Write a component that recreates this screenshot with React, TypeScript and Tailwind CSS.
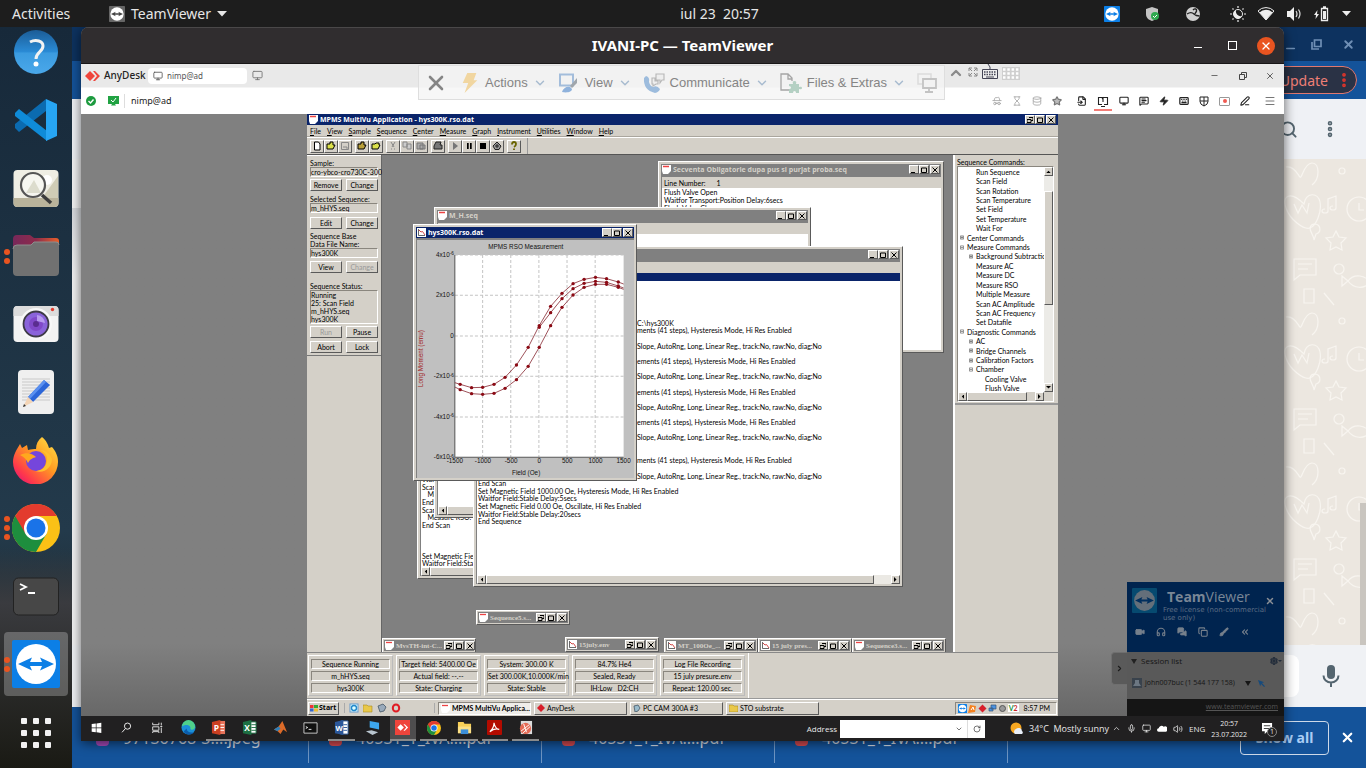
import React from "react";
import {
  ChevronDown, ChevronUp, X, Minus, Search, Menu, Copy, Zap, Star, Keyboard, Monitor,
  HatGlasses, Hourglass, Database, FileInput, MessageSquareText, PenLine, RotateCw, Headphones, Video,
  MessagesSquare, Brush, ChevronsLeft, Settings, Volume2, Mic, MoreVertical,
} from "lucide-react";

const RAISED = "border border-t-white border-l-white border-r-[#5a5a5a] border-b-[#5a5a5a] bg-[#d4d0c8]";
const SUNKEN = "border border-t-[#8a867e] border-l-[#8a867e] border-r-white border-b-white";
const TINY = "font-['Lato','Liberation_Sans',sans-serif]";

/* ---------- shared drawings ---------- */

function TvLogo({ className, bg = "#0c7fe6", fg = "#0c7fe6" }: { className: string; bg?: string; fg?: string }) {
  return (
    <svg viewBox="0 0 48 48" className={className} aria-hidden="true">
      <rect width="48" height="48" rx="2" fill={bg} />
      <circle cx="24" cy="24" r="20" fill="currentColor" />
      <path d="M6 24l14-6.500-2 4.500h12l-2-4.500L42 24l-14 6.500 2-4.500H18l2 4.500z" fill={fg} />
    </svg>
  );
}

function ChromeLogo({ className }: { className: string }) {
  return (
    <svg viewBox="0 0 48 48" className={className} aria-hidden="true">
      <circle cx="24" cy="24" r="24" fill="#fbc116" />
      <path d="M24 24L3.200 12A24 24 0 0 0 24 48l10.400-18z" fill="#1e8e3e" />
      <path d="M3.200 12A24 24 0 0 1 44.800 12H24L13.600 30z" fill="#e33b2e" />
      <circle cx="24" cy="24" r="12" fill="#fff" />
      <circle cx="24" cy="24" r="9.500" fill="#1a73e8" />
    </svg>
  );
}

function DocIcon({ chart = false }: { chart?: boolean }) {
  return (
    <svg viewBox="0 0 9 9" className="size-[9px] shrink-0" aria-hidden="true">
      <path d={chart ? "M0 0h9v9H0z" : "M0 0h9v6L6 9H1L0 6z"} fill="#fff" />
      {chart ? (
        <>
          <path d="M1.500 1v6.500H8" stroke="#444" fill="none" strokeWidth=".8" />
          <path d="M2 2l2 2 1.500-.5L8 7" stroke="#c33" fill="none" strokeWidth=".9" />
        </>
      ) : (
        <path d="M1 1.500h6" stroke="#e44" strokeWidth="1.300" />
      )}
    </svg>
  );
}

/* ---------- top panel ---------- */

function TopBar() {
  return (
    <header className="relative z-20 flex h-[27px] shrink-0 items-center justify-between bg-[#1d1d1d] text-[14px] text-[#e6e6e6]">
      <div className="flex flex-1 items-center pl-3">
        <button className="w-[97px] text-left">Activities</button>
        <button className="flex items-center gap-[6px]">
          <TvLogo className="size-4 text-white" bg="#666" fg="#444" />
          TeamViewer
          <svg viewBox="0 0 10 6" className="w-[10px]" aria-hidden="true"><path d="M0 0h10L5 5.500z" fill="#e6e6e6" /></svg>
        </button>
      </div>
      <button className="ml-[76px] whitespace-pre">iul 23  20:57</button>
      <div className="flex flex-1 items-center justify-end pr-[15px]">
        <TvLogo className="mr-[25px] size-4 text-white" />
        <svg viewBox="0 0 16 16" className="mr-6 size-4" aria-hidden="true">
          <path d="M7 1l6 2v5c0 4-3 6-6 7-3-1-6-3-6-7V3z" fill="#c4c4c4" />
          <circle cx="10" cy="10" r="4" fill="#2fa84f" /><path d="M8 10l1.500 1.500L12 9" stroke="#fff" fill="none" />
        </svg>
        <svg viewBox="0 0 16 16" className="mr-[29px] size-4" aria-hidden="true">
          <circle cx="8" cy="8" r="7" fill="#cfcfcf" />
          <path d="M2 8c3-2 5-2 7 0s4 2 5.500 2M8 4c2-2 4-1 3.500 1s-2 2-1 3" stroke="#222" fill="none" strokeWidth="1.400" />
        </svg>
        <svg viewBox="0 0 16 16" className="mr-3 size-4" aria-hidden="true">
          <circle cx="8" cy="8" r="4.500" fill="none" stroke="#eee" />
          <path d="M6 4a5 5 0 0 0 6 6 4.500 4.500 0 1 1-6-6z" fill="#eee" />
          <path d="M8 0v2M8 14v2M0 8h2M14 8h2M2.500 2.500l1 1M12.500 12.500l1 1M2.500 13.500l1-1M12.500 3.500l1-1" stroke="#eee" strokeWidth="1.200" />
        </svg>
        <svg viewBox="0 0 16 14" className="mr-3 w-4" aria-hidden="true">
          <path d="M0 4a11 11 0 0 1 16 0L8 13z" fill="none" stroke="#eee" /><path d="M1.500 5.500a9 9 0 0 1 13 0L8 13z" fill="#eee" />
        </svg>
        <svg viewBox="0 0 16 16" className="mr-3 size-4" aria-hidden="true">
          <path d="M1 5h3l4-4v14l-4-4H1z" fill="#eee" /><path d="M10 5q2 3 0 6M12.500 3.500q3 4.500 0 9" stroke="#ddd" fill="none" strokeWidth="1.200" />
        </svg>
        <svg viewBox="0 0 16 16" className="mr-3 size-4" aria-hidden="true">
          <path d="M3.500 4L0 9h2l-.5 4L5 8H3z" fill="#eee" />
          <path d="M7.500 2.500h6v12h-6zM9 1h3" stroke="#eee" fill="none" strokeWidth="1.300" /><path d="M9 5h3v8H9z" fill="#eee" />
        </svg>
        <svg viewBox="0 0 10 6" className="w-[9px]" aria-hidden="true"><path d="M0 0h10L5 5.500z" fill="#eee" /></svg>
      </div>
    </header>
  );
}

/* ---------- dock ---------- */

const dockItems: { name: string; dots: number; art: React.ReactNode }[] = [
  { name: "Help", dots: 0, art: (
    <svg viewBox="0 0 48 48" className="size-12">
      <defs><linearGradient id="hg" x2="0" y2="1"><stop offset="0" stopColor="#1b5c96" /><stop offset=".5" stopColor="#2a8bd6" /><stop offset=".52" stopColor="#3b9be0" /><stop offset="1" stopColor="#4aa8ea" /></linearGradient></defs>
      <circle cx="24" cy="24" r="22" fill="url(#hg)" />
      <path d="M18 14c6-3 13-1 13 4 0 6-7 6-7 13" stroke="#f2f2f2" strokeWidth="3" fill="none" /><circle cx="24" cy="36" r="2.500" fill="#fff" />
    </svg>) },
  { name: "Visual Studio Code", dots: 0, art: (
    <svg viewBox="0 0 48 48" className="size-12">
      <path d="M3 32l4 4 27-21V3L3 28z" fill="#0b6bb0" />
      <path d="M3 17l4-4 28 22v10L3 20z" fill="#0f8bd8" /><path d="M34 3l11 5v32l-11 5z" fill="#27a5f3" />
    </svg>) },
  { name: "Image Viewer", dots: 0, art: (
    <svg viewBox="0 0 48 48" className="size-12">
      <rect x="1.500" y="6" width="45" height="37" rx="4" fill="#efeee4" /><path d="M30 34l16-22v22z" fill="#cfccb6" />
      <path d="M1.500 34h45v5a4 4 0 0 1-4 4h-37a4 4 0 0 1-4-4z" fill="#b9b39b" /><circle cx="35" cy="16" r="5" fill="#fff" />
      <circle cx="21" cy="21" r="12" fill="#f6f6f0" stroke="#555" strokeWidth="2.200" /><path d="M14 29l8-13 7 13z" fill="#dcdccd" />
      <path d="M30 31l9 8" stroke="#3c3c3c" strokeWidth="3.500" />
    </svg>) },
  { name: "Files", dots: 2, art: (
    <svg viewBox="0 0 48 48" className="size-12">
      <defs><linearGradient id="fg"><stop offset="0" stopColor="#77285a" /><stop offset=".5" stopColor="#8d2b4b" /><stop offset="1" stopColor="#e9602a" /></linearGradient></defs>
      <path d="M1 7q0-4 4-4h13l4 3h22q3 0 3 3v12H1z" fill="url(#fg)" /><path d="M1 17q0-4 4-4h14l3-3h22q3 0 3 3v27q0 4-4 4H5q-4 0-4-4z" fill="#717171" />
      <path d="M1 17q0-4 4-4h14l3-3h22q3 0 3 3" fill="none" stroke="#8d8d8d" />
    </svg>) },
  { name: "Screenshot", dots: 0, art: (
    <svg viewBox="0 0 48 48" className="size-12">
      <rect x="1.500" y="6" width="45" height="36" rx="4" fill="#f3f3f3" /><path d="M1.500 16h45v-6a4 4 0 0 0-4-4h-37a4 4 0 0 0-4 4z" fill="#dcdcdc" />
      <circle cx="24" cy="24" r="16" fill="#f8f8f8" /><circle cx="24" cy="24" r="12.500" fill="#8a63da" stroke="#3d3a46" strokeWidth="1.800" />
      <circle cx="24" cy="24" r="7" fill="#8049c9" /><circle cx="24" cy="24" r="3" fill="#5a2d90" /><path d="M25 15a9 9 0 0 1 8 8l-8-2z" fill="#b79aee" /><circle cx="40.500" cy="9.500" r="1.700" fill="#e23a2c" />
    </svg>) },
  { name: "Text Editor", dots: 0, art: (
    <svg viewBox="0 0 48 48" className="size-12">
      <rect x="6" y="2" width="36" height="44" rx="4" fill="#efefef" />
      <path d="M10 11h28M10 14h28M10 17h28M10 20h28M10 23h28M10 26h28M10 29h28M10 32h28" stroke="#c9c9c9" />
      <path d="M16 29L32 12l6 5-17 17z" fill="#2c66d8" /><path d="M16 29L32 12l2 2-16 17z" fill="#5a90f0" /><path d="M16 29l5 5-10 5z" fill="#f3d4b5" /><path d="M12 36l2 2-3 1z" fill="#333" />
    </svg>) },
  { name: "Firefox", dots: 0, art: (
    <svg viewBox="0 0 48 48" className="size-12">
      <defs><linearGradient id="ff" x1="1" x2=".1" y2="1"><stop offset="0" stopColor="#ffe94a" /><stop offset=".45" stopColor="#ff9a22" /><stop offset=".8" stopColor="#ff3a4a" /><stop offset="1" stopColor="#e4107a" /></linearGradient></defs>
      <path d="M30 1c5 4 6 8 7 11l3-1c4 5 6 9 6 15a22.500 22.500 0 0 1-45 0C1 19 5 13 8 8l2 4 5-3 1 5c3-1 6-1 8-1 0-5 2-9 6-12z" fill="url(#ff)" />
      <circle cx="24" cy="25" r="10" fill="#7546dc" /><path d="M8 19c6-3 12-2 16 2-3 1-6 2-8 6-2-4-4-6-8-8z" fill="#ffa81e" /><path d="M28 14c6 2 9 8 6 14-2 5-6 7-11 7 10 3 17-4 17-12-2-5-6-9-12-9z" fill="#ffc02e" />
    </svg>) },
  { name: "Google Chrome", dots: 3, art: <ChromeLogo className="size-12" /> },
  { name: "Terminal", dots: 0, art: (
    <svg viewBox="0 0 48 48" className="size-12">
      <rect x="1.500" y="6" width="45" height="37" rx="5" fill="#474747" stroke="#222" /><path d="M8 12l6 3-6 3M16 21h7" stroke="#fff" strokeWidth="1.800" fill="none" />
    </svg>) },
  { name: "TeamViewer", dots: 2, art: <TvLogo className="size-12 text-white" /> },
];

function Dock() {
  return (
    <nav aria-label="Dock" className="relative z-10 flex w-[72px] shrink-0 flex-col overflow-hidden bg-linear-to-b from-[#17293a] via-[#233a4b] via-68% to-[#171813]">
      <div className="absolute inset-x-0 bottom-0 h-[220px] bg-linear-to-b from-transparent via-[#3a3b3f] via-25% to-[#1a1a14]" />
      <ul className="relative -mt-[9px] flex flex-col">
        {dockItems.map((d) => (
          <li key={d.name} className="relative flex h-[68px] items-center justify-center">
            {d.name === "TeamViewer" && <span className="absolute inset-x-1 inset-y-[2px] rounded bg-white/25" />}
            <span className="absolute left-1 flex flex-col gap-[3px]">
              {Array.from({ length: d.dots }, (_, i) => <i key={i} className="size-[6px] rounded-full bg-[#e95420]" />)}
            </span>
            <button aria-label={d.name} className="relative">{d.art}</button>
          </li>
        ))}
      </ul>
      <button aria-label="Show Applications" className="relative mt-5 grid grid-cols-3 gap-[6px] self-center">
        {Array.from({ length: 9 }, (_, i) => <i key={i} className="size-[6px] rounded-[1px] bg-[#f2f2f2]" />)}
      </button>
    </nav>
  );
}

/* ---------- browser behind ---------- */

function Doodles() {
  return (
    <svg className="absolute inset-0 h-full w-full" aria-hidden="true">
      <defs>
        <pattern id="doodle" width="90" height="150" patternUnits="userSpaceOnUse">
          <g fill="none" stroke="#f8f5f0" strokeWidth="1.200">
            <path d="M20 45c-14-14-22-8-18 4s18 22 24 20 12-16 10-26-14-10-16 2zM10 45l4 9 4-8 5 8 2-10" />
            <path d="M2 8c8-2 12 8 14 10s4-14 12-14 8 16 0 22" /><circle cx="58" cy="12" r="3" /><circle cx="75" cy="50" r="12" /><path d="M75 44v7h5" />
            <path d="M44 52v-12l8-3v12M44 52a3 2 0 1 1-3-2M52 49a3 2 0 1 1-3-2" /><path d="M32 75a5 5 0 1 0-6-6c0 4 4 8 4 12z" />
            <path d="M52 72l3 6 7 1-5 5 1 7-6-3-6 3 1-7-5-5 7-1z" /><path d="M10 100h22v16H16l-6 5zM14 105h14M14 110h10" />
            <circle cx="55" cy="110" r="5" /><path d="M64 122c6-8 18-6 22 2-6 6-16 6-22-2zM64 122l-6-5v10z" /><path d="M20 130v14h10v-14zM40 134l10 12" />
          </g>
        </pattern>
      </defs>
      <rect width="100%" height="100%" fill="url(#doodle)" />
    </svg>
  );
}

const downloads = ["97136768-3....jpeg", "40531_T_IVA....pdf", "40531_T_IVA....pdf", "40531_T_IVA....pdf"];

function Browser() {
  return (
    <div className="flex h-full flex-col">
      <div className="flex h-[34px] items-center justify-end gap-5 bg-[#0d325f] pr-[11px] text-[#6f8fb5]">
        <Minus size={13} strokeWidth={3} className="mt-2 -mr-[6px]" />
        <svg viewBox="0 0 11 11" className="size-[11px]" aria-hidden="true"><path d="M3.500 1h6.500v6.500H3.500zM1 3v7h7" fill="none" stroke="currentColor" strokeWidth="1.700" /></svg>
        <X size={13} strokeWidth={3.500} />
      </div>
      <div className="flex h-[38px] items-center justify-end bg-[#14539a] pr-[9px]">
        <button className="flex h-7 w-40 items-center justify-end rounded-full border border-[#e0786f] bg-[#2a3245] pr-[3px] text-[14px] text-[#ee7f76]">
          Update <MoreVertical size={18} strokeWidth={3} className="ml-[7px] text-[#e0352b]" />
        </button>
      </div>
      <div className="flex h-[60px] items-center justify-end gap-[22px] bg-[#eff1f5] pr-[26px] text-[#54656f]">
        <Search size={19} strokeWidth={2.400} /><MoreVertical size={20} strokeWidth={3.500} />
      </div>
      <div className="relative flex flex-1 justify-between bg-[#ece7e0]">
        <div className="w-[9px] bg-linear-to-b from-[#f2f2f3] from-10% via-[#d6d9dd] via-10% to-[#f2f2f3] to-24%" />
        <div className="relative w-[82px] overflow-hidden"><Doodles />
          <i className="absolute right-0 bottom-0 h-[142px] w-[6px] bg-[#c9c5bf]" />
        </div>
      </div>
      <div className="flex h-[62px] items-center justify-end gap-5 bg-[#f0f2f5] pr-[23px]">
        <span className="h-[42px] w-[200px] rounded-lg bg-white" />
        <svg viewBox="0 0 24 24" className="size-6 text-[#54656f]" aria-hidden="true"><rect x="8" y="1" width="8" height="14" rx="4" fill="currentColor" /><path d="M4.500 11.500a7.500 7 0 0 0 15 0M12 18.500V23" fill="none" stroke="currentColor" strokeWidth="2" /></svg>
      </div>
      <div className="flex h-[61px] items-center bg-[#14539a] pl-1 text-[16px] text-[#d5dce6]">
        {downloads.map((d, i) => (
          <div key={i} className="flex h-[50px] w-[233px] shrink-0 items-center gap-[14px] border-r border-[#6d94c2] pl-5">
            <i className={i ? "h-4 w-[13px] rounded-sm bg-[#d64a50]" : "h-4 w-[13px] rounded-sm bg-[#a64ab8]"} />{d}
          </div>
        ))}
        <div className="ml-auto flex items-center gap-[11px] pr-[11px]">
          <button className="h-[34px] w-[89px] rounded border border-[#cdd9e8] text-[14px] font-bold text-[#a9cdf5]">Show all</button>
          <X size={15} strokeWidth={3.500} className="text-white" />
        </div>
      </div>
    </div>
  );
}

/* ---------- AnyDesk rows ---------- */

const faint = "text-[#a5a5a5]";
function AnyDeskBars() {
  return (
    <div className="bg-white text-[#222]">
      <div className="flex h-[23px] items-center bg-[#e9e9e9] pl-[4px] text-[10px]">
        <svg viewBox="0 0 15 10" className="mr-1 w-[15px]" aria-hidden="true"><path d="M5 0l5 5-5 5-5-5z" fill="#ef443b" /><path d="M8 0h2l5 5-5 5H8l4-5z" fill="#ef443b" /></svg>
        <span className="w-[44px] font-medium">AnyDesk</span>
        <span className="flex h-4 w-[99px] items-center gap-[4px] rounded-sm bg-white pl-[5px] text-[8px] text-[#555]"><Monitor size={10} />nimp@ad</span>
        <Monitor size={11} className="ml-[5px] text-[#777]" />
        <div className="ml-auto flex items-center gap-[18px] pr-[9px] text-[#444]">
          <Minus size={9} strokeWidth={2} />
          <svg viewBox="0 0 8 8" className="ml-[2px] size-2" aria-hidden="true"><path d="M.5 2.500h5v5h-5zM2.500 2V.5h5v5H6" fill="none" stroke="currentColor" /></svg>
          <X size={10} strokeWidth={2} />
        </div>
      </div>
      <div className="flex h-[27px] items-center border-t border-[#f4f4f4] pl-[5px] text-[10px]">
        <svg viewBox="0 0 10 10" className="size-[10px]" aria-hidden="true"><circle cx="5" cy="5" r="5" fill="#1d9b3f" /><path d="M2.500 5l2 2 3-3.500" stroke="#fff" strokeWidth="1.400" fill="none" /></svg>
        <svg viewBox="0 0 11 10" className="ml-3 w-[11px]" aria-hidden="true"><path d="M0 0h11v8H7l1 1.500H3L4 8H0z" fill="#21a343" /><path d="M3 4l2 2 3-4" stroke="#fff" fill="none" /></svg>
        <span className="ml-[5px] border-l border-[#ddd] pl-[6px] text-[9px]">nimp@ad</span>
        <div className="ml-auto flex items-center gap-[10px] pr-[8px]">
          <HatGlasses size={10} className={faint} /><Hourglass size={10} className={faint} /><Database size={10} className={faint} /><Star size={10} strokeWidth={3} fill="#bbb" className="mr-[5px] text-[#777]" />
          <FileInput size={10} strokeWidth={2.600} />
          <svg viewBox="0 0 18 20" className="-mx-[3px] h-5 w-[18px]" aria-hidden="true"><path d="M8 13.500H4.500v-7h9v7H10M7 15.500h4M8 8l1-1v4" fill="none" stroke="#222" strokeWidth="1.100" /><path d="M0 19h18" stroke="#ef5048" strokeWidth="1.500" /></svg>
          <Monitor size={10} strokeWidth={2.600} /><MessageSquareText size={10} strokeWidth={2.600} /><Zap size={10} fill="#222" /><Keyboard size={10} strokeWidth={3} />
          <svg viewBox="0 0 10 11" className="w-[10px]" aria-hidden="true"><path d="M1 1h8v4.500q0 3-4 4.500-4-1.500-4-4.500zM5 1v9M1 5h8" fill="none" stroke="#222" /></svg>
          <span className="flex h-[9px] w-[11px] items-center justify-center rounded-[1px] border border-[#999]"><i className="size-1 rounded-full bg-[#f05a52]" /></span><PenLine size={10} strokeWidth={2.600} />
          <Menu size={12} className="ml-[4px] text-[#777]" />
        </div>
      </div>
    </div>
  );
}

function Chev() {
  return <ChevronDown size={14} strokeWidth={2.500} className="mr-[11px] ml-[5px] text-[#a9bcd0]" />;
}

function TvToolbar() {
  return (
    <div className="absolute top-[1px] left-[337px] z-10 flex h-[35px] w-[527px] items-center border border-[#dedede] bg-[#f4f4f4]/75 font-['Liberation_Sans',sans-serif] text-[13px] text-[#858585]">
      <X size={24} strokeWidth={2.600} className="mr-[14px] ml-[5px]" />
      <svg viewBox="0 0 16 22" className="mr-[7px] h-5 w-4" aria-hidden="true"><path d="M5 0h10l-3 8h4L2 22l4-11H0z" fill="#f1d6a0" /></svg>
      <button className="flex items-center">Actions<Chev /></button>
      <svg viewBox="0 0 20 20" className="mr-[7px] size-5" aria-hidden="true"><path d="M2 1.500h13v11H2z" fill="none" stroke="#a3bddb" strokeWidth="2" /><path d="M19 5v5l-5 5-2-2z" fill="#a0a6ac" /><path d="M4 19c1-4 5-6 8-5l2 2c0 3-5 4-10 3z" fill="#8fb2dc" /></svg>
      <button className="flex items-center">View<Chev /></button>
      <svg viewBox="0 0 22 20" className="mr-[5px] h-5 w-[22px]" aria-hidden="true"><path d="M3 3q4 1 3 6 1 4 4 5 4-2 7 2-1 3-5 4Q0 17 1 5z" fill="#9dbcdd" /><path d="M13 1h8v6h-2l-2 3V7h-4zM9 5h3v3h3v3h-2l-3 2v-2H9z" fill="#eee" stroke="#b7b7b7" strokeWidth="1.100" /></svg>
      <button className="flex items-center">Communicate<Chev /></button>
      <svg viewBox="0 0 22 20" className="mr-[5px] h-5 w-[22px]" aria-hidden="true"><path d="M9 17H1V1h7l4 4v3M8 1v5h4" fill="none" stroke="#a5a5a5" strokeWidth="1.300" /><path d="M9 11h4q-1-3 1.500-3T16 11h3v3q3-1 3 1t-3 1v4h-3q0-2-1.500-2T13 20H9v-4q2 0 2-1.500T9 13z" fill="#b4d0c3" /></svg>
      <button className="flex items-center">Files &amp; Extras<Chev /></button>
      <svg viewBox="0 0 20 20" className="size-5" aria-hidden="true"><path d="M5 11H1V1h13v4" fill="none" stroke="#dcdcdc" strokeWidth="1.600" /><path d="M6 6h13v9H6zM12 15v4M8 19h8" fill="none" stroke="#c3c3c3" strokeWidth="1.800" /></svg>
    </div>
  );
}

/* ---------- MPMS application ---------- */

function WinButtons({ restore = false }: { restore?: boolean }) {
  const b = `flex h-[9px] w-[10px] items-center justify-center ${RAISED}`;
  return (
    <span className="ml-auto flex shrink-0">
      <button aria-label="Minimize" className={b}>
        <svg viewBox="0 0 6 6" className="size-[6px]"><path d={restore ? "M2 .5h4v3H4M0 2.500h4v3H0z" : "M0 5.500h4"} stroke="#000" fill="none" /></svg>
      </button>
      <button aria-label="Maximize" className={b}><svg viewBox="0 0 6 6" className="size-[6px]"><path d="M.5 1h5v4.500h-5z" stroke="#000" fill="none" /></svg></button>
      <button aria-label="Close" className={`ml-px ${b}`}><svg viewBox="0 0 6 6" className="size-[6px]"><path d="M.5 .5l5 5M5.500.5l-5 5" stroke="#000" fill="none" /></svg></button>
    </span>
  );
}

function MdiWindow({ place, title, active = false, chart = false, line, scroll = false, children }: {
  place: string; title: string; active?: boolean; chart?: boolean; line?: string; scroll?: boolean; children?: React.ReactNode;
}) {
  return (
    <section className={`absolute flex flex-col p-[2px] ${RAISED} ${place}`}>
      <header className={`flex h-[11px] shrink-0 items-center gap-[2px] px-px font-['Open_Sans',sans-serif] text-[7px] font-bold ${active ? "bg-[#0a246a] text-white" : "bg-[#808080] text-[#d4d0c8]"}`}>
        <DocIcon chart={chart} /><span>{title}</span><WinButtons />
      </header>
      <div className="flex min-h-0 flex-1 flex-col border-t-2 border-l border-[#808080] bg-white">
        {line !== undefined && <div className="flex h-[11px] shrink-0 items-center gap-[11px] bg-[#d4d0c8] pl-[2px]"><span>Line Number:</span><span>{line}</span></div>}
        <div className="relative min-h-0 flex-1 overflow-hidden">{children}</div>
        {scroll && (
          <div className="flex h-[9px] shrink-0 justify-between bg-[#ebe9e4]">
            <span className={`flex w-[9px] items-center justify-center ${RAISED}`}><svg viewBox="0 0 4 6" className="h-[5px]"><path d="M4 0v6L1 3z" /></svg></span>
            <span className={`mr-[17px] flex-1 ${RAISED}`} />
            <span className={`flex w-[9px] items-center justify-center ${RAISED}`}><svg viewBox="0 0 4 6" className="h-[5px]"><path d="M0 0v6l3-3z" /></svg></span>
          </div>
        )}
      </div>
    </section>
  );
}

function MiniWindow({ place, title, chart = false }: { place: string; title: string; chart?: boolean }) {
  return (
    <section className={`absolute w-[94px] p-px ${RAISED} ${place}`}>
      <header className="flex h-[11px] items-center gap-[2px] bg-[#808080] px-px font-['Liberation_Serif',serif] text-[7px] font-bold text-[#d4d0c8]">
        <DocIcon chart={chart} /><span className="whitespace-nowrap">{title}</span><WinButtons restore />
      </header>
    </section>
  );
}

const lower = [[164,498],[180,506],[214,518],[247,520],[281,517],[314,502],[348,476],[383,436],[416,379],[450,314],[484,259],[517,222],[550,199],[584,190],[617,190],[652,199],[668,205]];
const upper = [[164,485],[180,490],[214,500],[247,499],[281,490],[314,469],[348,432],[383,379],[416,314],[450,256],[484,217],[517,188],[550,175],[584,169],[617,173],[652,183],[668,189]];
const virgin = [[416,319],[450,275],[484,233],[517,203],[550,187],[584,181],[617,184],[652,195],[668,201]];
const yTicks: [number, string, string][] = [[102, "4x10", "-6"], [223, "2x10", "-6"], [345, "0", ""], [466, "-2x10", "-6"], [588, "-4x10", "-6"], [709, "-6x10", "-6"]];

function Chart() {
  return (
    <svg viewBox="51 57 648 714" preserveAspectRatio="none" className="h-full w-full bg-[#c0c0c0] font-['Liberation_Sans',sans-serif]" role="img" aria-label="MPMS RSO Measurement">
      <rect x="164" y="102" width="504" height="607" fill="#fff" />
      <path d="M247 102v607M331 102v607M415 102v607M499 102v607M583 102v607M164 223h504M164 345h504M164 466h504M164 588h504M164 102h504" stroke="#c4c4c4" strokeWidth="3" strokeDasharray="9 6" />
      <path d="M164 102v607h504" stroke="#555" strokeWidth="3" fill="none" />
      <g fill="none" stroke="#8a2f38" strokeWidth="2.500">
        {[lower, upper, virgin].map((s, i) => <polyline key={i} points={s.map((p) => p.join(",")).join(" ")} />)}
      </g>
      <g fill="#8b0a14">
        {[lower, upper, virgin].flatMap((s, i) => s.filter((p) => p[0] > 170 && p[0] < 660).map((p) => <circle key={`${i}-${p[0]}`} cx={p[0]} cy={p[1]} r="5" />))}
      </g>
      <g fontSize="19" fill="#111">
        <text x="376" y="83" textAnchor="middle">MPMS RSO Measurement</text>
        {yTicks.map(([y, t, e]) => <text key={y} x="161" y={y + 5} textAnchor="end">{t}<tspan dy="-4" fontSize="14">{e}</tspan></text>)}
        {[-1500, -1000, -500, 0, 500, 1000, 1500].map((v, i) => <text key={v} x={164 + i * 84} y="726" textAnchor="middle">{v}</text>)}
        <text x="377" y="761" textAnchor="middle">Field (Oe)</text>
        <text x="0" y="0" transform="translate(70 413) rotate(-90)" textAnchor="middle" fill="#a01818">Long Moment (emu)</text>
      </g>
    </svg>
  );
}

const SLOPE = "Slope, AutoRng, Long, Linear Reg., track:No, raw:No, diag:No";
const STEPS = "ements (41 steps), Hysteresis Mode, Hi Res Enabled";
const seqLines: Record<number, string> = {
  6: "C:\\hys300K", 7: "ments (41 steps), Hysteresis Mode, Hi Res Enabled", 9: SLOPE, 11: STEPS, 13: SLOPE, 15: STEPS, 17: SLOPE, 19: STEPS, 21: SLOPE,
  24: "ments (41 steps), Hysteresis Mode, Hi Res Enabled", 26: SLOPE, 27: "End Scan", 28: "Set Magnetic Field 1000.00 Oe, Hysteresis Mode, Hi Res Enabled", 29: "Waitfor Field:Stable Delay:5secs",
  30: "Set Magnetic Field 0.00 Oe, Oscillate, Hi Res Enabled", 31: "Waitfor Field:Stable Delay:20secs", 32: "End Sequence",
};
const backLines = ["Waitfor", "Scan", "   Measure", "End Scan", "Scan", "   Measure RSO:", "End Scan", "", "", "", "Set Magnetic Field", "Waitfor Field:Stable"];

const tree: [string, number, string][] = [
  ["Run Sequence", 1, ""], ["Scan Field", 1, ""], ["Scan Rotation", 1, ""], ["Scan Temperature", 1, ""], ["Set Field", 1, ""], ["Set Temperature", 1, ""], ["Wait For", 1, ""],
  ["Center Commands", 0, "+"], ["Measure Commands", 0, "-"], ["Background Subtraction", 1, "+"], ["Measure AC", 1, ""], ["Measure DC", 1, ""], ["Measure RSO", 1, ""], ["Multiple Measure", 1, ""],
  ["Scan AC Amplitude", 1, ""], ["Scan AC Frequency", 1, ""], ["Set Datafile", 1, ""], ["Diagnostic Commands", 0, "-"], ["AC", 1, "+"], ["Bridge Channels", 1, "+"], ["Calibration Factors", 1, "+"],
  ["Chamber", 1, "-"], ["Cooling Valve", 2, ""], ["Flush Valve", 2, ""],
];
const indent = ["pl-[2px]", "pl-[11px]", "pl-5"];

const toolIcons: (React.ReactNode | null)[] = [
  <path key="n" d="M2.500 1h4l1.500 2v6h-5.500z" fill="#fff" stroke="#000" />,
  <path key="o" d="M1 3h3V1h3v3h2L7 8H1z" fill="#dbe04b" stroke="#000" />,
  <path key="s" d="M1.500 1.500h7v7h-7zM3 6h4v2" fill="none" stroke="#888" />, null,
  <path key="o2" d="M1 3h3V1h3v3h2L7 8H1z" fill="#b9a03b" stroke="#000" />,
  <path key="o3" d="M1 3h3l1-1h3v2h1L7 8H1z" fill="#dbe04b" stroke="#000" />, null,
  <path key="c" d="M3 1l3 5M7 1L4 6M3 8h1M6 8h1" stroke="#888" fill="none" />,
  <path key="cp" d="M1 1h4v5H1zM5 3h4v5H5z" stroke="#888" fill="#ccc" />,
  <path key="p" d="M1 2h6v6H1zM4 4h5v4H4z" stroke="#777" fill="#aaa" />, null,
  <path key="pr" d="M1 5l2-4h5L7 4h2v4H1z" stroke="#222" fill="#777" />, null,
  <path key="pl" d="M3 1l5 4-5 4z" fill="#777" />,
  <path key="pa" d="M3 2h1.700v6H3zM6 2h1.700v6H6z" />,
  <path key="st" d="M2 2h6v6H2z" />,
  <path key="rw" d="M5 1L9 5 7 8.500H3L1 5zM4 4h2v2H4z" fill="#999" stroke="#222" />, null,
  <path key="h" d="M3 3.500Q3 1 5 1t2 2-2 3M5 7.500V9" stroke="#6a6400" strokeWidth="1.800" fill="none" />,
];

function PanelButton({ children, disabled = false }: { children: string; disabled?: boolean }) {
  return <button disabled={disabled} className={`h-3 flex-1 leading-[9px] ${RAISED} disabled:text-[#999]`}>{children}</button>;
}
function Field({ children }: { children: React.ReactNode }) {
  return <div className={`h-[10px] leading-[8px] whitespace-nowrap ${SUNKEN}`}>{children}</div>;
}

const statusBoxes = [
  ["Sequence Running", "m_hHYS.seq", "hys300K"], ["Target field: 5400.00 Oe", "Actual field: --.--", "State: Charging"], ["System: 300.00 K", "Set 300.00K,10.000K/min", "State: Stable"],
  ["84.7% He4", "Sealed, Ready", "IH:Low   D2:CH"], ["Log File Recording", "15 july presure.env", "Repeat: 120.00 sec."],
];

function RemoteApp() {
  return (
    <div className={`flex min-w-0 flex-1 flex-col bg-[#d4d0c8] text-[7px] leading-[8px] text-black ${TINY}`}>
      <header className="flex h-[11px] shrink-0 items-center gap-[2px] bg-[#0a246a] pr-[2px] pl-[2px] font-['Open_Sans',sans-serif] font-bold text-white">
        <DocIcon />MPMS MultiVu Application - hys300K.rso.dat<WinButtons restore />
      </header>
      <nav className="flex h-3 shrink-0 items-center gap-[6px] border-b border-[#aaa69e] pl-[3px]">
        {["File", "View", "Sample", "Sequence", "Center", "Measure", "Graph", "Instrument", "Utilities", "Window", "Help"].map((m) => (
          <button key={m}><u>{m[0]}</u>{m.slice(1)}</button>
        ))}
      </nav>
      <div className="flex h-[17px] shrink-0 items-center border-t border-white">
        <div className="flex h-full items-center border-r border-[#999] pr-[6px] pl-[3px]">
          {toolIcons.map((t, i) => t ? (
            <span key={i} className={`flex h-[13px] w-[14px] items-center justify-center ${RAISED}`}><svg viewBox="0 0 10 10" className="size-[10px]">{t}</svg></span>
          ) : <i key={i} className="w-[3px]" />)}
        </div>
      </div>

      <div className="flex min-h-0 flex-1 border-t border-[#555]">
        <aside className="w-[75px] shrink-0 border-r border-[#666]">
          <div className="flex h-[201px] flex-col border-t border-b border-t-white border-b-[#777] px-[3px] pt-[3px]">
            <span>Sample:</span><Field>cro-ybco-cro730C-3006</Field>
            <div className="mt-[2px] flex gap-1"><PanelButton>Remove</PanelButton><PanelButton>Change</PanelButton></div>
            <span className="mt-1">Selected Sequence:</span><Field>m_hHYS.seq</Field>
            <div className="mt-[4px] flex gap-1"><PanelButton>Edit</PanelButton><PanelButton>Change</PanelButton></div>
            <span className="mt-[3px]">Sequence Base<br />Data File Name:</span><Field>hys300K</Field>
            <div className="mt-[3px] flex gap-1"><PanelButton>View</PanelButton><PanelButton disabled>Change</PanelButton></div>
            <span className="mt-[9px]">Sequence Status:</span>
            <div className={`h-[34px] ${SUNKEN}`}>Running<br />25: Scan Field<br />m_hHYS.seq<br />hys300K</div>
            <div className="mt-[2px] flex gap-1"><PanelButton disabled>Run</PanelButton><PanelButton>Pause</PanelButton></div>
            <div className="mt-[3px] flex gap-1"><PanelButton>Abort</PanelButton><PanelButton>Lock</PanelButton></div>
          </div>
        </aside>

        <main className="relative min-w-0 flex-1 overflow-hidden bg-[#808080]">
          <MdiWindow place="left-[276px] top-[6px] h-[192px] w-[286px]" title="Secventa Obligatorie dupa pus si purjat proba.seq" line="1">
            <div className="pl-[2px] whitespace-pre">{"Flush Valve Open\nWaitfor Transport:Position Delay:6secs\nFlush Valve Close"}</div>
          </MdiWindow>
          <MdiWindow place="left-[35px] top-[240px] h-[184px] w-[300px]" title="" scroll>
            <div className="absolute inset-x-0 bottom-0 grid h-[92px] auto-rows-fr pl-px whitespace-pre">{backLines.map((l, i) => <div key={i}>{l}</div>)}</div>
          </MdiWindow>
          <MdiWindow place="left-[52px] top-[52px] h-[311px] w-[377px]" title="M_H.seq" line="" scroll />
          <MdiWindow place="left-[91px] top-[91px] h-[341px] w-[430px]" title="" line="" scroll>
            <div className="grid h-[252px] auto-rows-fr whitespace-pre">
              {Array.from({ length: 33 }, (_, i) => (
                <div key={i} className={i === 0 ? "bg-[#0a246a]" : i < 27 ? "pl-[160px]" : "pl-px"}>{seqLines[i] ?? ""}</div>
              ))}
            </div>
          </MdiWindow>
          <MdiWindow place="left-[31px] top-[69px] h-[257px] w-[224px]" title="hys300K.rso.dat" active chart><Chart /></MdiWindow>
          <MiniWindow place="left-[94px] top-[455px]" title="Sequence5.s..." />
          <MiniWindow place="left-0 top-[483px]" title="MvsTH-int-C..." />
          <MiniWindow place="left-[183px] top-[482px]" title="15july.env" chart />
          <MiniWindow place="left-[282px] top-[483px]" title="MT_100Oe_..." chart />
          <MiniWindow place="left-[376px] top-[483px]" title="15 july pres..." chart />
          <MiniWindow place="left-[470px] top-[483px]" title="Sequence3.s..." />
        </main>

        <aside className="w-[105px] shrink-0 border-l-2 border-white">
          <div className="h-[250px] border-b-2 border-[#999] pt-[3px] pr-1 pl-[2px]">
            <div>Sequence Commands:</div>
            <div className={`flex h-[236px] flex-col bg-white ${SUNKEN}`}>
              <div className="flex min-h-0 flex-1">
                <ul className="grid h-[226px] min-w-0 flex-1 auto-rows-fr overflow-hidden whitespace-nowrap">
                  {tree.map(([t, d, s]) => (
                    <li key={t} className={`flex items-center ${indent[d]}`}>
                      <span className="mr-[3px] flex w-1 shrink-0">{s && <svg viewBox="0 0 5 5" className="size-[5px]"><path d={s === "+" ? "M.5.500h4v4h-4zM1 2.500h3M2.500 1v3" : "M.5.500h4v4h-4zM1 2.500h3"} stroke="#444" strokeWidth=".7" fill="none" /></svg>}</span>{t}
                    </li>
                  ))}
                </ul>
                <div className="flex w-[9px] flex-col bg-[#ecebe7]">
                  <span className={`flex h-[9px] items-center justify-center ${RAISED}`}><svg viewBox="0 0 6 4" className="w-[5px]"><path d="M0 4h6L3 1z" /></svg></span>
                  <span className={`mt-[15px] h-[114px] ${RAISED}`} />
                  <span className={`mt-auto flex h-[9px] items-center justify-center ${RAISED}`}><svg viewBox="0 0 6 4" className="w-[5px]"><path d="M0 0h6L3 3z" /></svg></span>
                </div>
              </div>
              <div className="flex h-[9px] bg-[#d4d0c8]">
                <span className={`flex w-[9px] items-center justify-center ${RAISED}`}><svg viewBox="0 0 4 6" className="h-[5px]"><path d="M4 0v6L1 3z" /></svg></span>
                <span className={`w-[60px] ${RAISED}`} />
                <span className={`ml-auto mr-[9px] flex w-[9px] items-center justify-center ${RAISED}`}><svg viewBox="0 0 4 6" className="h-[5px]"><path d="M0 0v6l3-3z" /></svg></span>
              </div>
            </div>
          </div>
        </aside>
      </div>

      <div className="flex h-[47px] shrink-0 items-center gap-[3px] border-t border-b border-t-[#888] border-b-[#999] pl-px">
        {statusBoxes.map((b, i) => (
          <div key={i} className="flex h-[41px] w-[85px] flex-col justify-center gap-[2px] border border-t-white border-r-[#bbb] border-b-[#bbb] border-l-white px-[2px]">
            {b.map((t) => <div key={t} className={`h-[10px] text-center leading-[8px] whitespace-pre ${SUNKEN}`}>{t}</div>)}
          </div>
        ))}
        <i className="h-full border-l border-white" />
      </div>

      <footer className="flex h-[17px] shrink-0 items-center gap-[3px] border-t border-white px-px">
        <button className={`flex h-[13px] w-[31px] items-center gap-px px-px font-['Open_Sans',sans-serif] font-bold ${RAISED}`}>
          <svg viewBox="0 0 8 8" className="size-2"><path d="M0 1h3.500v3H0z" fill="#e33" /><path d="M4 1h4v3H4z" fill="#3a3" /><path d="M0 4.500h3.500v3H0z" fill="#36c" /><path d="M4 4.500h4v3H4z" fill="#eb3" /></svg>Start
        </button>
        <div className="ml-[2px] flex w-[91px] items-center gap-1 border-r border-l border-[#aaa] pl-1">
          <svg viewBox="0 0 10 10" className="size-[10px]"><rect x="1" y="1" width="8" height="8" fill="#dff" stroke="#69c" /><circle cx="5" cy="5" r="2.500" fill="none" stroke="#28c" strokeWidth="1.400" /></svg>
          <svg viewBox="0 0 10 10" className="size-[10px]"><path d="M0 2h4l1 1h4v6H0z" fill="#e9c84a" stroke="#a88a20" strokeWidth=".6" /></svg>
          <svg viewBox="0 0 10 10" className="size-[10px]"><path d="M1 3l5-2 3 3-2 4-4 1z" fill="#9ab" stroke="#456" strokeWidth=".8" /></svg>
          <svg viewBox="0 0 10 10" className="size-[10px]"><ellipse cx="5" cy="5" rx="3.200" ry="3.600" fill="none" stroke="#e01c24" strokeWidth="2" /></svg>
        </div>
        <button className={`flex h-[13px] w-[93px] items-center gap-[2px] px-[2px] font-bold whitespace-nowrap ${SUNKEN} bg-[#efede9]`}><DocIcon />MPMS MultiVu Applica...</button>
        <button className={`flex h-[13px] w-[93px] items-center gap-[2px] px-[2px] ${RAISED}`}><svg viewBox="0 0 8 8" className="size-2"><path d="M4 0l4 4-4 4-4-4z" fill="#d81f2a" /></svg>AnyDesk</button>
        <button className={`flex h-[13px] w-[93px] items-center gap-[2px] px-[2px] ${RAISED}`}><svg viewBox="0 0 8 8" className="size-2"><path d="M1 2l4-1 2 3-2 3-3 1z" fill="#9bc" stroke="#456" strokeWidth=".8" /></svg>PC CAM 300A #3</button>
        <button className={`flex h-[13px] w-[93px] items-center gap-[2px] px-[2px] ${RAISED}`}><svg viewBox="0 0 9 8" className="h-2 w-[9px]"><path d="M0 1h4l1 1h4v6H0z" fill="#e9c84a" stroke="#a88a20" strokeWidth=".6" /></svg>STO substrate</button>
        <div className={`ml-auto flex h-[13px] items-center gap-[1px] px-[2px] ${SUNKEN}`}>
          <TvLogo className="size-[9px] text-white" />
          <svg viewBox="0 0 9 9" className="size-[9px]"><path d="M0 9l2-8 6 1-1 6z" fill="#f58220" /><path d="M3 6l2-3 1 3" stroke="#fff" fill="none" /></svg>
          <svg viewBox="0 0 9 9" className="size-[9px]"><path d="M4.500.500l4 4-4 4-4-4z" fill="#d81f2a" /></svg>
          <svg viewBox="0 0 9 9" className="size-[9px]"><path d="M3 1h5v4H3zM1 4h4v3H1z" fill="#4d93e0" stroke="#357" strokeWidth=".7" /></svg>
          <svg viewBox="0 0 9 9" className="size-[9px]"><circle cx="4.500" cy="4.500" r="3" fill="#999" stroke="#555" /></svg>
          <span className="bg-white px-px font-bold text-[#1a8f3a]">V<span className="text-[#c22]">2</span></span>
          <span className="mx-1">8:57 PM</span>
        </div>
      </footer>
    </div>
  );
}

/* ---------- TeamViewer side panel ---------- */

function SidePanel() {
  return (
    <div className="absolute right-0 bottom-0 flex items-end">
      <button aria-label="Collapse" className="mb-[31px] flex h-[33px] w-4 items-center justify-center rounded-l border border-r-0 border-[#6f6f6f] bg-[#5a5a5a] text-[#1c1c1c]"><ChevronDown size={9} strokeWidth={3} className="-rotate-90" /></button>
      <div className="w-[157px] font-['Open_Sans',sans-serif] text-[7px]">
        <div className="h-[70px] bg-[#00244f] pt-[6px] text-[#5c6d84]">
          <div className="flex items-start pl-[5px]">
            <TvLogo className="size-[25px] text-[#646f7a]" bg="#064a70" fg="#012f5e" />
            <div className="ml-[6px]">
              <div className="pl-1 text-[14px] leading-[18px] text-[#7a8796]"><b>Team</b>Viewer</div>
              <div className="font-['DejaVu_Sans',sans-serif] leading-[8px]">Free license (non-commercial<br />use only)</div>
            </div>
            <X size={10} strokeWidth={3.500} className="absolute top-[14px] right-[9px] text-[#8a8f96]" />
          </div>
          <div className="mt-[5px] flex gap-[11px] pl-2 text-[#76808c]">
            <Video size={10} fill="#76808c" /><Headphones size={10} strokeWidth={2.600} /><MessagesSquare size={10} fill="#76808c" /><Copy size={10} strokeWidth={2.600} /><Brush size={10} fill="#76808c" /><ChevronsLeft size={10} strokeWidth={2.600} />
          </div>
        </div>
        <div className="h-[47px] bg-[#595959] text-[#161616]">
          <div className="flex h-[18px] items-center gap-1 pr-[2px] pl-[4px] text-[8px]">
            <svg viewBox="0 0 6 5" className="w-[6px]"><path d="M0 0h6L3 5z" fill="#222" /></svg>Session list
            <Settings size={8} strokeWidth={4} className="ml-auto text-[#222c3a]" /><svg viewBox="0 0 6 4" className="-ml-1 w-[4px]"><path d="M0 0h6L3 3z" fill="#222c3a" /></svg>
          </div>
          <div className="mt-1 flex h-[18px] items-center gap-[3px] pl-[5px]">
            <svg viewBox="0 0 10 10" className="size-[10px]"><path d="M0 0h10v10H0z" fill="#39424c" /><path d="M3 2h4v3l2 3H1l2-3z" fill="#6c7782" /></svg>john007buc (1 544 177 158)
            <svg viewBox="0 0 6 5" className="ml-[7px] w-[6px]"><path d="M0 0h6L3 5z" fill="#161616" /></svg>
            <svg viewBox="0 0 8 8" className="ml-1 size-[7px]"><path d="M0 0l7 2.500-2.500 1L8 7 7 8 3.500 4.500l-1 2.500z" fill="#164a7c" /></svg>
          </div>
        </div>
        <div className="flex h-[17px] items-center justify-end bg-[#151515] pr-[6px] text-[#555]"><a href="https://www.teamviewer.com" className="underline">www.teamviewer.com</a></div>
      </div>
    </div>
  );
}

/* ---------- Windows taskbar ---------- */

const taskIcons: { n: string; run?: boolean; on?: boolean; a: React.ReactNode }[] = [
  { n: "Start", a: <path d="M1 3l6-1v6H1zM8 2l7-1v7H8zM1 9h6v6l-6-1zM8 9h7v7l-7-1z" fill="#fff" /> },
  { n: "Search", a: <path d="M6 10L1.500 15M9.500 1.500a4.500 4.500 0 1 1 0 9 4.500 4.500 0 0 1 0-9z" stroke="#fff" fill="none" strokeWidth="1.300" /> },
  { n: "Task view", a: <path d="M1 1v3h9V1M1 7h9v5H1zM1 16v-2h9v2M13.500 1v4M13.500 8v8M12 6.500h3" stroke="#eee" fill="none" strokeWidth="1.300" /> },
  { n: "Edge", a: <><circle cx="8" cy="8" r="7.500" fill="#1b8fd8" /><path d="M1 7a7 7 0 0 1 14 0c0 4-5 4-5 2 1-4-6-5-9-2z" fill="#4fd08a" /><path d="M6 9c0 4 4 5 8 4-3 4-10 3-11-1z" fill="#0b5cab" /></> },
  { n: "PowerPoint", run: true, a: <><path d="M7 1h8v14H7z" fill="#e8735a" /><path d="M9 5h5M9 8h5M9 11h5" stroke="#fff" /><path d="M1 2l9-2v16l-9-2z" fill="#cb3f22" /><text x="3" y="12" fontSize="9" fontWeight="bold" fill="#fff">P</text></> },
  { n: "Excel", a: <><path d="M7 2h8v12H7z" fill="#fff" stroke="#1d7044" /><path d="M10 5h5M10 8h5M10 11h5" stroke="#1d7044" /><path d="M1 2l9-2v16l-9-2z" fill="#1d7044" /><text x="2.500" y="12" fontSize="9" fontWeight="bold" fill="#fff">X</text></> },
  { n: "MATLAB", a: <><path d="M1 10l5-3 4-6 5 12-4-3-3 5-3-3z" fill="#dc6a28" /><path d="M1 10l5-3 2 2-3 3z" fill="#2f7fb8" /></> },
  { n: "Command Prompt", a: <><path d="M1 3h14v11H1z" fill="#111" stroke="#ccc" /><path d="M3 7l2 1-2 1M6 10h3" stroke="#eee" fill="none" /></> },
  { n: "Word", run: true, a: <><path d="M7 1h8v14H7z" fill="#fff" stroke="#2b579a" /><path d="M10 5h4M10 8h4M10 11h4" stroke="#2b579a" /><path d="M1 2l9-2v16l-9-2z" fill="#2b579a" /><text x="1.500" y="11.500" fontSize="8" fontWeight="bold" fill="#fff">W</text></> },
  { n: "Remote Desktop", a: <><path d="M5 1l10 2v7L5 8z" fill="#3da7ee" /><path d="M1 12l6-1 7 2-6 3z" fill="#b9c5cf" /></> },
  { n: "AnyDesk", run: true, on: true, a: <><path d="M0 0h16v16H0z" fill="#ef443b" /><path d="M6 4.500L9.500 8 6 11.500 2.500 8zM9 4.500h1.500L14 8l-3.500 3.500H9L12 8z" fill="#fff" /></> },
  { n: "Chrome", run: true, a: null },
  { n: "File Explorer", run: true, a: <><path d="M1 2h6l1 2h7v10H1z" fill="#f7cf57" /><path d="M1 7h14v7H1z" fill="#fbdf86" /><path d="M4 10h8v5H4z" fill="#3c8fd9" /></> },
  { n: "Acrobat", run: true, a: <><rect width="16" height="16" rx="1" fill="#b30b00" /><path d="M3 12.500C6 10 7.500 6 7.500 3c.5 4 3 7 5.500 7-3-1-7 0-10 2.500z" stroke="#fff" fill="none" strokeWidth="1.200" /></> },
  { n: "MPMS", run: true, a: <><path d="M3 1h12v14H3z" fill="#ddd" /><circle cx="8" cy="9" r="6" fill="#e46a55" /><path d="M3 12l9-7M5 14l8-7M6 4l3 9" stroke="#fff" /></> },
];

function Taskbar() {
  return (
    <footer className="flex h-[25px] shrink-0 items-center bg-[#212021] font-['Open_Sans',sans-serif] text-[8px] text-[#e8e8e8]">
      <div className="grid h-full w-[460px] shrink-0 grid-cols-15">
        {taskIcons.map((t) => (
          <button key={t.n} aria-label={t.n} className={`mx-[2px] flex items-center justify-center border-b-2 ${t.run ? "border-[#8a8a8a]" : "border-transparent"} ${t.on ? "bg-[#4e4d4e]" : ""}`}>
            {t.a ? <svg viewBox="0 0 16 16" className={t.n === "Start" || t.n === "Search" || t.n === "Task view" ? "size-[11px]" : "size-[15px]"}>{t.a}</svg> : <ChromeLogo className="size-[14px]" />}
          </button>
        ))}
      </div>
      <label htmlFor="addr" className="ml-auto pr-[3px]">Address</label>
      <div className="flex h-[18px] w-[145px] shrink-0 items-center bg-white text-[#333]">
        <input id="addr" className="h-full min-w-0 flex-1 outline-none" /><ChevronDown size={8} />
        <span className="ml-1 flex h-full w-[18px] items-center justify-center border-l border-[#ddd]"><RotateCw size={8} /></span>
      </div>
      <svg viewBox="0 0 14 14" className="ml-[25px] size-[14px] shrink-0"><circle cx="6" cy="6" r="5.500" fill="#f7a721" /><path d="M5 12a3 3 0 0 1 1-5 3.500 3.500 0 0 1 6 2 2 2 0 0 1 0 3z" fill="#e8eef8" /></svg>
      <span className="ml-[5px] w-[83px] shrink-0 text-[9px] whitespace-pre">34°C  Mostly sunny</span>
      <div className="flex items-center gap-[6px]">
        <ChevronUp size={9} /><Mic size={9} /><Monitor size={9} />
        <svg viewBox="0 0 12 8" className="w-[10px]"><path d="M2 8a2 2 0 0 1 0-4 3.500 3.500 0 0 1 6-2 3 3 0 0 1 3 6z" fill="#fff" /></svg><Volume2 size={10} />ENG
      </div>
      <div className="mx-[6px] text-center text-[7px] leading-[11px]">20:57<br />23.07.2022</div>
      <div className="relative mr-[11px] ml-[9px]">
        <svg viewBox="0 0 12 12" className="size-[11px]"><path d="M0 0h11v9H6l-3 3V9H0z" fill="#fff" /><path d="M2 3h7M2 6h7" stroke="#333" /></svg>
        <span className="absolute top-1 left-[5px] flex size-[10px] items-center justify-center rounded-full border border-[#888] bg-[#212021] text-[7px]">1</span>
      </div>
    </footer>
  );
}

/* ---------- TeamViewer window ---------- */

function TeamViewerWindow() {
  return (
    <section className="absolute top-0 right-[82px] bottom-[27px] left-[9px] flex flex-col overflow-hidden rounded-t-lg bg-[#808080] shadow-[0_2px_12px_rgba(0,0,0,0.6)]">
      <header className="relative flex h-[37px] shrink-0 items-center justify-center border-t border-b border-t-[#4a4849] border-b-[#181617] bg-[#302d2f] text-[15px] font-bold text-white">
        <h1>IVANI-PC — TeamViewer</h1>
        <div className="absolute right-[9px] flex items-center">
          <button aria-label="Minimize" className="mt-1 mr-[26px] h-[1px] w-2 bg-white" />
          <button aria-label="Maximize" className="mr-[20px] size-[9px] border border-white" />
          <button aria-label="Close" className="flex size-[18px] items-center justify-center rounded-full bg-[#e95420]"><X size={12} strokeWidth={2.600} /></button>
        </div>
      </header>
      <div className="relative flex min-h-0 flex-1 flex-col">
        <AnyDeskBars />
        <TvToolbar />
        <div className="absolute top-0 left-[867px] z-10 flex items-start gap-[4px] pt-[3px] text-[#8a8a8a]">
          <ChevronUp size={16} strokeWidth={3.500} className="-mt-[2px]" />
          <svg viewBox="0 0 10 10" className="size-[10px]"><path d="M1 4V1h3M1 1l3 3M6 1h3v3M9 1L6 4M1 6v3h3M1 9l3-3M6 9h3V6M9 9L6 6" stroke="#888" fill="none" /></svg>
          <svg viewBox="0 0 16 15" className="-mt-[3px] h-[15px] w-4"><path d="M6 0l2 3v2M.5 5.500h15v9H.5z" stroke="#445" fill="#eee" /><path d="M2 8h12M2 10.500h12" stroke="#445" strokeWidth="1.500" strokeDasharray="1.500 1" /><path d="M4 13h8" stroke="#445" /></svg>
          <svg viewBox="0 0 18 14" className="h-[14px] w-[18px]"><path d="M0 0h18v13H0z" fill="#cfcfcf" /><path d="M1 2.500h16M1 6.500h16M1 10.500h16" stroke="#fff" strokeWidth="2.500" strokeDasharray="2.500 1.800" /></svg>
        </div>
        <div className="relative flex min-h-0 flex-1 bg-linear-to-b from-[#808080] from-88% to-[#686868] px-[226px]">
          <RemoteApp />
          <SidePanel />
        </div>
        <Taskbar />
      </div>
    </section>
  );
}

export default function App() {
  return (
    <div className="flex h-screen flex-col overflow-hidden font-['Noto_Sans','Open_Sans',sans-serif]">
      <TopBar />
      <div className="flex min-h-0 flex-1">
        <Dock />
        <div className="relative min-w-0 flex-1">
          <Browser />
          <TeamViewerWindow />
        </div>
      </div>
    </div>
  );
}
